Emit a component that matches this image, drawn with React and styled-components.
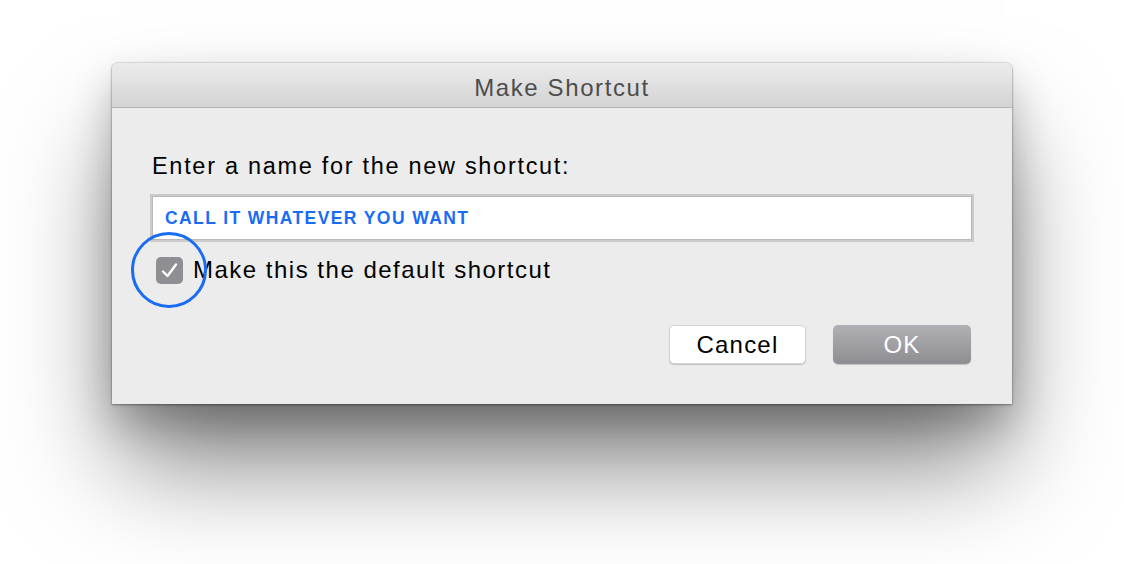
import React from 'react'
import styled, { createGlobalStyle } from 'styled-components'

const Global = createGlobalStyle`
  html, body { margin: 0; padding: 0; background: #fff; }
  body { font-family: "Liberation Sans", Arial, sans-serif; }
`

const Page = styled.div`
  width: 1124px;
  height: 564px;
  box-sizing: border-box;
  padding: 63px 0 0 112px;
  overflow: hidden;
  background: #fff;
`

const Window = styled.div`
  width: 900px;
  background: #ececec;
  border-radius: 6px 6px 0 0;
  box-shadow:
    0 0 0 1px rgba(0, 0, 0, 0.07),
    0 1px 3px rgba(0, 0, 0, 0.35),
    0 20px 40px rgba(0, 0, 0, 0.22),
    0 66px 100px -8px rgba(0, 0, 0, 0.5);
`

const TitleBar = styled.div`
  height: 45px;
  box-sizing: border-box;
  padding-top: 5px;
  border-bottom: 1px solid #b4b4b4;
  border-radius: 6px 6px 0 0;
  background: linear-gradient(#ececec, #d3d3d3);
  display: flex;
  align-items: center;
  justify-content: center;
  color: #4d4d4d;
  font-size: 24px;
  letter-spacing: 1.6px;
`

const Body = styled.div`
  padding: 43px 38px 40px 38px;
  display: flex;
  flex-direction: column;
`

const Prompt = styled.div`
  padding-left: 2px;
  font-size: 23.5px;
  line-height: 30px;
  letter-spacing: 1.7px;
  color: #000;
`

const NameField = styled.div`
  margin-top: 13px;
  height: 48px;
  box-sizing: border-box;
  border: 2px solid #cacaca;
  box-shadow: inset 0 0 0 1px #b9b9b9;
  background: #fff;
  padding: 0 13px;
  display: flex;
  align-items: center;
  color: #1a6cf4;
  font-weight: bold;
  font-size: 17.5px;
  letter-spacing: 1.4px;
`

const CheckRow = styled.label`
  margin-top: 14px;
  height: 28px;
  display: flex;
  align-items: center;
  gap: 10px;
  padding-left: 6px;
  font-size: 24px;
  letter-spacing: 1.5px;
  color: #000;
`

const Box = styled.span`
  position: relative;
  width: 27px;
  height: 27px;
  border-radius: 5px;
  background: #8f8e93;
  display: flex;
  align-items: center;
  justify-content: center;
`

const Ring = styled.span`
  position: absolute;
  left: -25px;
  top: -25px;
  width: 76px;
  height: 76px;
  box-sizing: border-box;
  border: 3px solid #1a6cf4;
  border-radius: 50%;
`

const Actions = styled.div`
  margin-top: 41px;
  margin-right: 3px;
  display: flex;
  justify-content: flex-end;
  gap: 27px;
`

const Button = styled.button`
  width: ${p => p.$w}px;
  height: 39px;
  border-radius: 5px;
  font-family: "Liberation Sans", Arial, sans-serif;
  font-size: 24px;
  letter-spacing: 1.2px;
  padding: 0;
  color: ${p => (p.$primary ? '#fff' : '#000')};
  border: ${p => (p.$primary ? 'none' : '1px solid #d2d2d2')};
  background: ${p => (p.$primary ? 'linear-gradient(#b1b0b5, #8e8d92)' : '#fff')};
  box-shadow: 0 1px 1px rgba(0, 0, 0, 0.18);
`

export default function App() {
  return (
    <Page>
      <Global />
      <Window>
        <TitleBar>Make Shortcut</TitleBar>
        <Body>
          <Prompt>Enter a name for the new shortcut:</Prompt>
          <NameField>CALL IT WHATEVER YOU WANT</NameField>
          <CheckRow>
            <Box>
              <svg width="17" height="15" viewBox="0 0 17 15">
                <path d="M2 8.5 L6.5 13 L15 1.5" fill="none" stroke="#fff" strokeWidth="2.4" strokeLinecap="round" strokeLinejoin="round" />
              </svg>
              <Ring />
            </Box>
            Make this the default shortcut
          </CheckRow>
          <Actions>
            <Button $w={137}>Cancel</Button>
            <Button $w={138} $primary>OK</Button>
          </Actions>
        </Body>
      </Window>
    </Page>
  )
}
